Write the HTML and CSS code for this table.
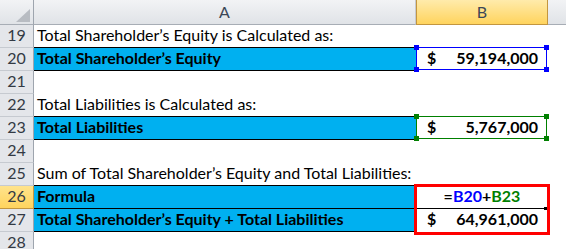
FILE: index.html
```html
<!DOCTYPE html>
<html>
<head>
<meta charset="utf-8">
<link rel="stylesheet" href="styles.css">
</head>
<body>
<div class="sheet">
  <div class="row head">
    <div class="rh corner"><span class="tri"></span></div>
    <div class="ch">A</div>
    <div class="ch sel">B</div>
    <div class="ch rest"></div>
  </div>
  <div class="row">
    <div class="rh">19</div>
    <div class="ca">Total Shareholder’s Equity is Calculated as:</div>
    <div class="cb"></div>
    <div class="cc"></div>
  </div>
  <div class="row">
    <div class="rh">20</div>
    <div class="ca blue">Total Shareholder’s Equity</div>
    <div class="cb num"><span>$</span><span>59,194,000</span>
      <div class="rng rng-blue"><i class="h tl"></i><i class="h tr"></i><i class="h bl"></i><i class="h br"></i></div>
    </div>
    <div class="cc"></div>
  </div>
  <div class="row">
    <div class="rh">21</div>
    <div class="ca"></div>
    <div class="cb"></div>
    <div class="cc"></div>
  </div>
  <div class="row">
    <div class="rh">22</div>
    <div class="ca">Total Liabilities is Calculated as:</div>
    <div class="cb"></div>
    <div class="cc"></div>
  </div>
  <div class="row">
    <div class="rh">23</div>
    <div class="ca blue">Total Liabilities</div>
    <div class="cb num"><span>$</span><span>5,767,000</span>
      <div class="rng rng-green"><i class="h tl"></i><i class="h tr"></i><i class="h bl"></i><i class="h br"></i></div>
    </div>
    <div class="cc"></div>
  </div>
  <div class="row">
    <div class="rh">24</div>
    <div class="ca"></div>
    <div class="cb"></div>
    <div class="cc"></div>
  </div>
  <div class="row">
    <div class="rh">25</div>
    <div class="ca">Sum of Total Shareholder’s Equity and Total Liabilities:</div>
    <div class="cb"></div>
    <div class="cc"></div>
  </div>
  <div class="row">
    <div class="rh active">26</div>
    <div class="ca blue">Formula</div>
    <div class="cb formula"><span class="op">=</span><span class="ref-b">B20</span><span class="op">+</span><span class="ref-g">B23</span>
      <i class="dot"></i>
      <div class="redbox"></div>
    </div>
    <div class="cc"></div>
  </div>
  <div class="row">
    <div class="rh">27</div>
    <div class="ca blue">Total Shareholder’s Equity + Total Liabilities</div>
    <div class="cb num"><span>$</span><span>64,961,000</span></div>
    <div class="cc"></div>
  </div>
  <div class="row">
    <div class="rh">28</div>
    <div class="ca"></div>
    <div class="cb"></div>
    <div class="cc"></div>
  </div>
</div>
</body>
</html>
```

FILE: styles.css
```css
* { box-sizing: border-box; }

body {
  margin: 0;
  background: #ffffff;
  font-family: Lato, "Open Sans", sans-serif;
  font-size: 16px;
  color: #000000;
}

.sheet {
  width: 566px;
  height: 249px;
  overflow: hidden;
}

.row {
  display: grid;
  grid-template-columns: 34px 382px 132px 1fr;
  height: 23px;
}

.row.head {
  height: 25px;
}

.rh {
  background: #e4e6ea;
  border-right: 1px solid #9ea5ae;
  border-bottom: 1px solid #c6cad0;
  color: #333a44;
  text-align: center;
  line-height: 20px;
}

.rh.active {
  background: linear-gradient(#ffe38c, #ffd45e);
  border-right-color: #c3963f;
  border-bottom-color: #c3963f;
}

.corner {
  background: linear-gradient(#f2f3f5, #e0e3e7);
  border-bottom: 1px solid #a7adb5;
  display: flex;
  justify-content: flex-end;
  align-items: flex-end;
  padding: 0 3px 2px 0;
}

.tri {
  width: 0;
  height: 0;
  border-left: 14px solid transparent;
  border-bottom: 13px solid #b8bcc2;
}

.ch {
  background: linear-gradient(#f2f3f5, #e0e3e7);
  border-bottom: 1px solid #a7adb5;
  border-right: 1px solid #c6cad0;
  color: #3c4757;
  text-align: center;
  line-height: 24px;
}

.ch.sel {
  background: linear-gradient(#ffebab, #ffd45e);
  border-left: 1px solid #c3963f;
  border-right: 1px solid #c3963f;
  border-bottom: 1px solid #c3963f;
}

.ch.rest {
  border-right: 0;
}

.ca {
  padding-left: 3px;
  line-height: 20px;
  white-space: nowrap;
  overflow: hidden;
}

.ca.blue {
  background: #00b0f0;
  font-weight: bold;
  border-bottom: 1px solid #000000;
  box-shadow: 0 -1px 0 #000000;
}

.cb {
  position: relative;
  line-height: 20px;
  font-weight: bold;
}

.cb.num {
  display: flex;
  justify-content: space-between;
  padding: 0 10px 0 11px;
}

.cb.formula {
  display: flex;
  justify-content: center;
  border-bottom: 1px solid #000000;
}

.op { color: #000000; }
.ref-b { color: #0000ff; }
.ref-g { color: #008000; }

.rng {
  position: absolute;
  left: 0;
  top: -1px;
  width: 131px;
  height: 23px;
  border: 1px solid;
}

.rng-blue { border-color: #0000ff; color: #0000ff; }
.rng-green { border-color: #008000; color: #008000; }

.h {
  position: absolute;
  width: 5px;
  height: 5px;
  background: currentColor;
}
.h.tl { left: -3px; top: -3px; }
.h.tr { right: -3px; top: -3px; }
.h.bl { left: -3px; bottom: -3px; }
.h.br { right: -3px; bottom: -3px; }

.redbox {
  position: absolute;
  left: -2px;
  top: -2px;
  width: 136px;
  height: 51px;
  border: 3px solid #ff0000;
}

.dot {
  position: absolute;
  right: 1px;
  bottom: -2px;
  width: 3px;
  height: 3px;
  background: #000000;
}

.cc {
  background: #ffffff;
}
```
